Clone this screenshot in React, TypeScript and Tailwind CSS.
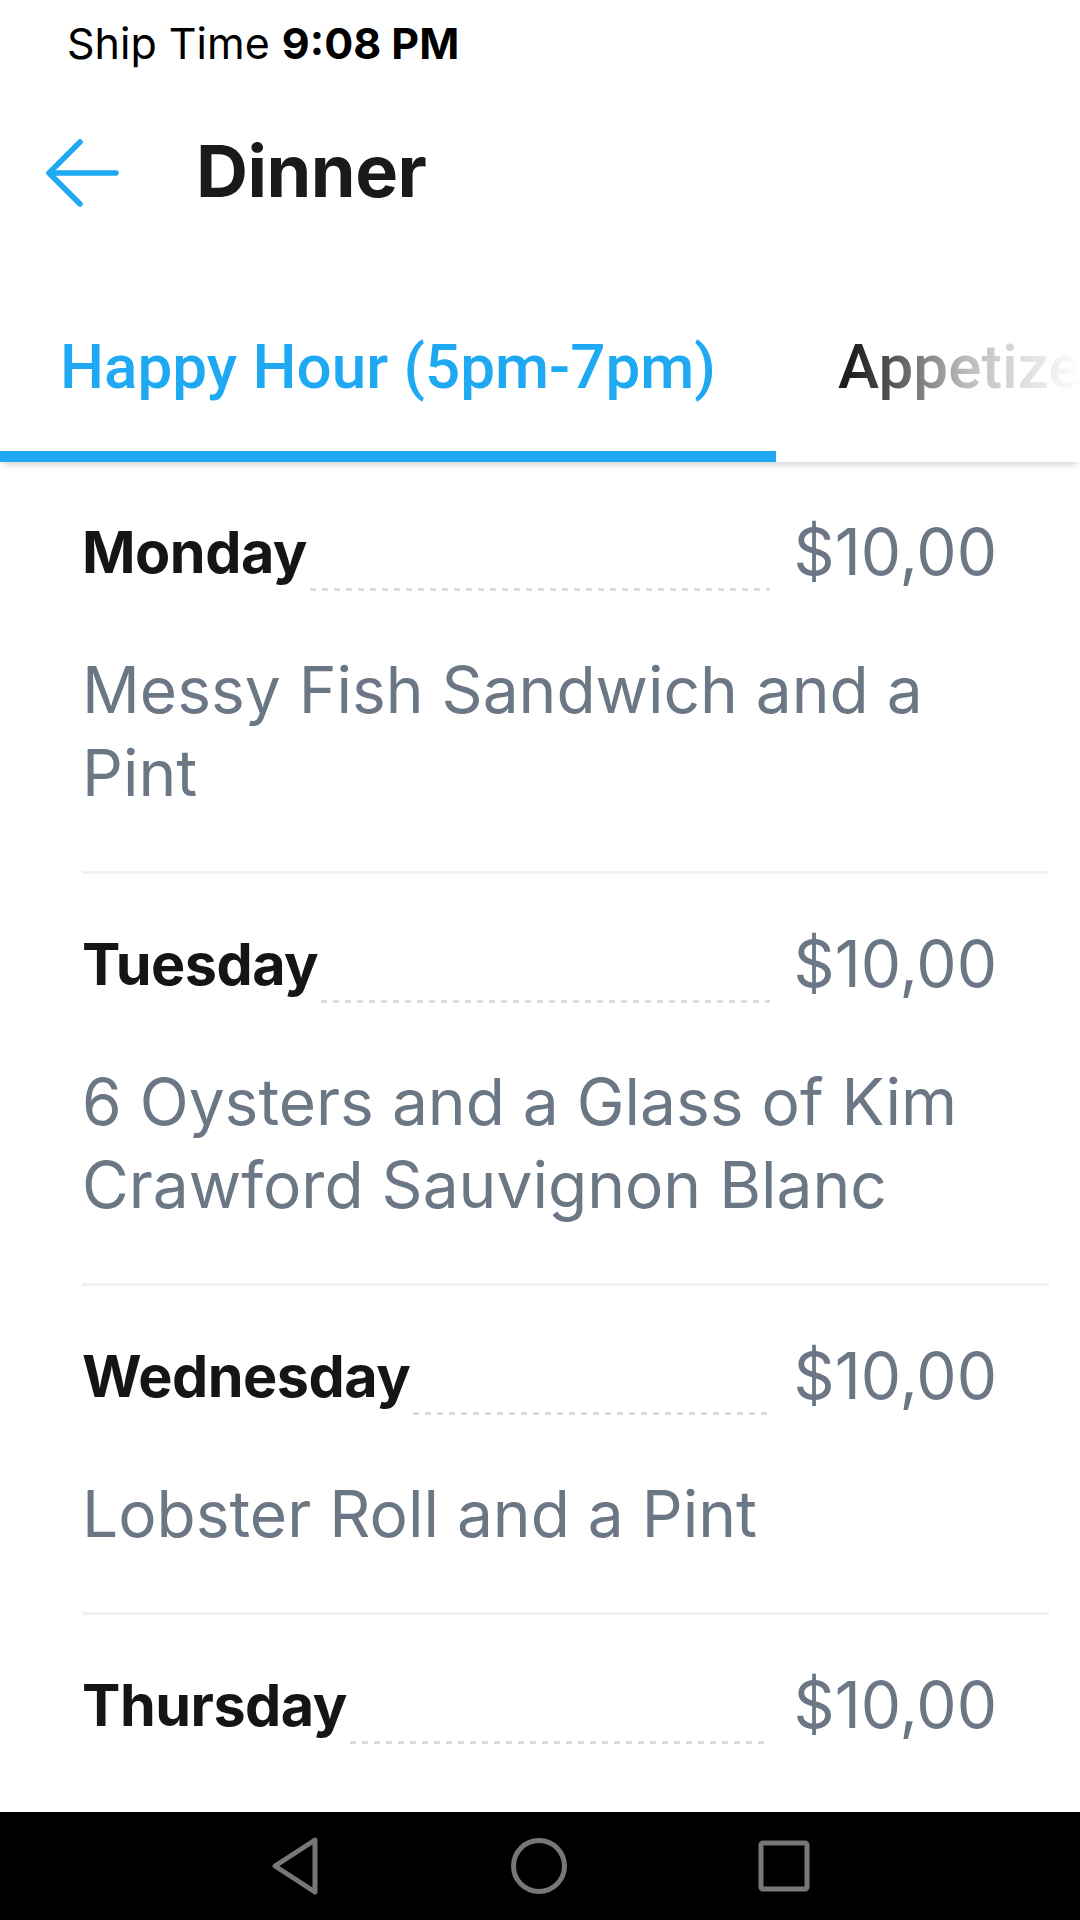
import React from 'react';

interface HappyHourItem {
  day: string;
  price: string;
  desc?: string;
}

const items: HappyHourItem[] = [
  { day: 'Monday', price: '$10,00', desc: 'Messy Fish Sandwich and a Pint' },
  { day: 'Tuesday', price: '$10,00', desc: '6 Oysters and a Glass of Kim Crawford Sauvignon Blanc' },
  { day: 'Wednesday', price: '$10,00', desc: 'Lobster Roll and a Pint' },
  { day: 'Thursday', price: '$10,00' },
];

function BackArrow() {
  return (
    <svg width="75" height="70" viewBox="0 0 75 70" fill="none">
      <path
        d="M4 35 H71 M4 35 L35 4 M4 35 L35 66"
        stroke="#1EA9F2"
        strokeWidth="5.5"
        strokeLinecap="round"
        strokeLinejoin="round"
      />
    </svg>
  );
}

function MenuRow({ item }: { item: HappyHourItem }) {
  // the last visible row runs under the nav bar, so no separator for it
  const border = item.desc ? 'border-b-[3px] border-[#f1f1f1]' : '';
  return (
    <div className="pl-[82px] pr-[31px]">
      <div className={`${border} pt-[55px] pb-[57px]`}>
        <div className="flex items-end pr-[52px]">
          <span className="text-[57.5px] leading-[70px] font-bold tracking-[-0.5px] text-[#151515] whitespace-nowrap">
            {item.day}
          </span>
          <div className="flex-1 self-end ml-[3px] mb-[-4px] h-[3px] bg-[linear-gradient(to_right,#dcdcdc_50%,transparent_50%)] bg-[length:12px_3px] bg-repeat-x" />
          <span className="ml-[24px] text-[64px] leading-[70px] text-[#6b7785] whitespace-nowrap">
            {item.price}
          </span>
        </div>
        {item.desc && (
          <p className="mt-[61px] pr-[52px] text-[64px] leading-[83px] text-[#6b7785]">
            {item.desc}
          </p>
        )}
      </div>
    </div>
  );
}

export default function App() {
  return (
    <div className="w-[1080px] h-[1920px] bg-white flex flex-col overflow-hidden font-[Inter,sans-serif]">
      {/* status bar */}
      <div className="h-[86px] pt-[15px] px-[67px] text-[43px] leading-[56px] text-black">
        Ship Time <span className="font-bold">9:08 PM</span>
      </div>

      {/* app bar */}
      <div className="h-[174px] flex items-center">
        <div className="ml-[45px] w-[75px] flex items-center">
          <BackArrow />
        </div>
        <h1 className="ml-[76px] text-[72px] leading-none font-bold tracking-[-0.5px] text-[#1a1a1a] mt-[-4px]">
          Dinner
        </h1>
      </div>

      {/* tabs */}
      <div className="relative z-10 h-[202px] flex items-end overflow-hidden bg-white shadow-[0_6px_6px_-3px_rgba(0,0,0,0.16)] font-[Roboto,sans-serif]">
        <div className="flex flex-col shrink-0">
          <span className="px-[60px] text-[62px] leading-[72px] font-medium text-[#1EA9F2] whitespace-nowrap">
            Happy Hour (5pm-7pm)
          </span>
          <div className="mt-[48px] h-[11px] bg-[#1EA9F2]" />
        </div>
        <div className="flex flex-col shrink-0">
          <span className="px-[62px] text-[62px] leading-[72px] font-medium text-[#1c1c1c] whitespace-nowrap">
            Appetizers
          </span>
          <div className="mt-[48px] h-[11px]" />
        </div>
        <div className="absolute right-0 top-0 bottom-0 w-[230px] bg-gradient-to-r from-white/0 via-white/70 to-white" />
      </div>

      {/* list */}
      <div className="flex-1 overflow-hidden">
        {items.map((item) => (
          <MenuRow key={item.day} item={item} />
        ))}
      </div>

      {/* android nav bar */}
      <div className="h-[108px] shrink-0 bg-black flex items-center justify-center gap-[190px]">
        <svg width="50" height="58" viewBox="0 0 50 58" fill="none">
          <path d="M45 3 L5 29 L45 55 Z" stroke="#777" strokeWidth="5" strokeLinejoin="round" />
        </svg>
        <svg width="58" height="58" viewBox="0 0 58 58" fill="none">
          <circle cx="29" cy="29" r="25.5" stroke="#777" strokeWidth="5" />
        </svg>
        <svg width="52" height="52" viewBox="0 0 52 52" fill="none">
          <rect x="3" y="3" width="46" height="46" rx="2" stroke="#777" strokeWidth="5" />
        </svg>
      </div>
    </div>
  );
}
